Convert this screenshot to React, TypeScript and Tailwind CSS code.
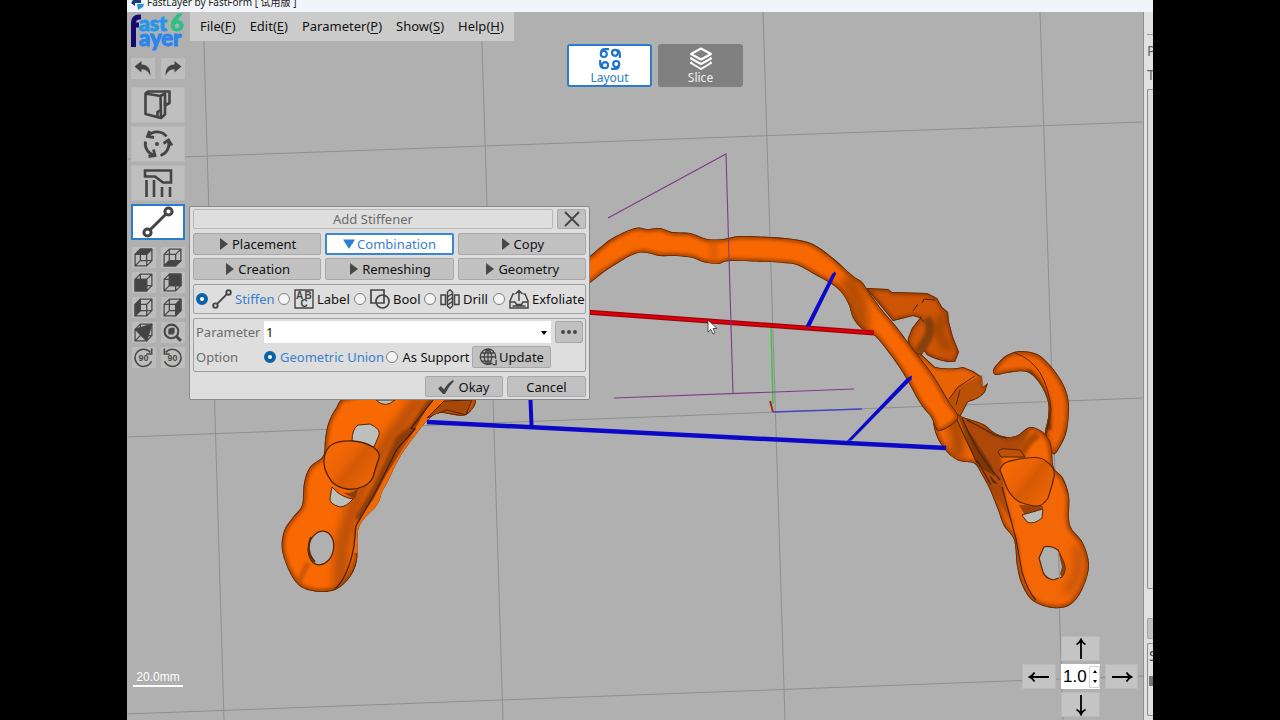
import { useState, type ReactNode } from "react";

type FaceName = "top" | "bottom" | "front" | "back" | "left" | "right" | "iso";

const FACES: Record<FaceName, string> = {
  top: "2,7 7,2 18,2 13,7",
  bottom: "2,18 7,13 18,13 13,18",
  front: "2,7 13,7 13,18 2,18",
  back: "7,2 18,2 18,13 7,13",
  left: "2,7 7,2 7,13 2,18",
  right: "13,7 18,2 18,13 13,18",
  iso: "2,7 18,2 13,18",
};

function CubeIcon({ face }: { face: FaceName }) {
  return (
    <svg viewBox="0 0 20 20" className="size-[21px]" fill="none" stroke="#484848" strokeWidth="1.2" strokeLinejoin="round">
      <path d="M2 7h11v11H2zM7 2h11v11H7zM2 7l5-5M13 7l5-5M13 18l5-5M2 18l5-5" />
      <polygon points={FACES[face]} fill="#444" />
    </svg>
  );
}

function RotateIcon({ flip }: { flip?: boolean }) {
  return (
    <svg viewBox="0 0 20 20" className="size-[21px]" fill="none" stroke="#484848" strokeWidth="1.5">
      <g transform={flip ? "translate(20 0) scale(-1 1)" : undefined}>
        <path d="M16.500 5.200A8.200 8.200 0 1 0 17.600 13.600" />
        <path d="M17.800 1.500v5.200h-5.200" />
      </g>
      <text x="10" y="13.2" fontSize="8.5" fontWeight="700" fontFamily="Liberation Sans, sans-serif" textAnchor="middle" fill="#484848" stroke="none">
        90
      </text>
    </svg>
  );
}

function StiffenIcon({ className }: { className: string }) {
  return (
    <svg viewBox="0 0 32 32" className={className} fill="none" stroke="#444" strokeWidth="3">
      <circle cx="5.5" cy="26.5" r="3.6" />
      <circle cx="26.5" cy="5.5" r="3.6" />
      <path d="M8.2 23.8 23.8 8.2" />
    </svg>
  );
}

function UndoIcon({ flip }: { flip?: boolean }) {
  return (
    <svg viewBox="0 0 20 20" className="size-5" fill="#444">
      <path
        transform={flip ? "translate(20 0) scale(-1 1)" : undefined}
        d="M1.500 7.500 8.500 2v3.500c6 .2 9.500 4 8.800 11.500C16 13 13.500 10.500 8.500 10.300V13.500z"
      />
    </svg>
  );
}

function ModelIcon() {
  return (
    <svg viewBox="0 0 32 32" className="size-8" fill="none" stroke="#444" strokeWidth="2.6" strokeLinejoin="round">
      <path d="M3.500 4.500 6 2.500H27.500V14l-4.500 2.500v-4" />
      <path d="M3.500 4.500 18.500 7l.5 22-15.500-4z" />
      <path d="M18.500 7 23 4.500V25.500l-4 3.500M15.500 28v-5l3-1.500" />
    </svg>
  );
}

function OrientIcon() {
  return (
    <svg viewBox="0 0 32 32" className="size-8" fill="none" stroke="#444" strokeWidth="2.8">
      <circle cx="15" cy="16" r="2" fill="#444" stroke="none" />
      <g transform="translate(-1 0)">
        <path d="M25.500 8.500A12 12 0 0 0 7 8" />
        <path d="M4.500 13.500A12 12 0 0 0 13.500 27.500" />
        <path d="M19.500 27.500A12 12 0 0 0 27.500 13" />
        <path d="M8.500 3 6.500 8.500l6.500 1M7.500 28.500l6.500-1-1.500-6M22.500 15.500l5-3.500 3.500 5.500" />
      </g>
    </svg>
  );
}

function SupportIcon() {
  return (
    <svg viewBox="0 0 32 32" className="size-8" fill="none" stroke="#444" strokeWidth="2.6">
      <path d="M3 3.500h26v12h-8l-8-6H3zM4.500 13v17M12 13v17M20 20v10M28 20v10" />
    </svg>
  );
}

function ZoomIcon() {
  return (
    <svg viewBox="0 0 20 20" className="size-[21px]" fill="none" stroke="#484848" strokeWidth="2">
      <circle cx="9" cy="9" r="6.5" />
      <path d="m13.800 13.800 4.200 4.200" strokeWidth="2.8" />
      <path d="m6 7 2-1.500h4V10l-1.500 2H6z" fill="#484848" stroke="none" />
    </svg>
  );
}

function LayoutIcon() {
  return (
    <svg viewBox="0 0 24 24" className="size-6" fill="none" stroke="#1b76cc" strokeWidth="2.2">
      {[0, 90, 180, 270].map((angle) => (
        <g key={angle} transform={`rotate(${angle} 12 12)`}>
          <circle cx="5.8" cy="7" r="3" />
          <path d="M3 6Q3 2.200 7 2.200H11" />
        </g>
      ))}
    </svg>
  );
}

function SliceIcon() {
  return (
    <svg viewBox="0 0 24 24" className="size-6" fill="none" stroke="#fff" strokeWidth="2" strokeLinejoin="round">
      <path d="M12 1.500 22 7l-10 5.500L2 7z" />
      <path d="m3 10.500-1 1 10 5.500 10-5.500-1-1M3 15l-1 1 10 6 10-6-1-1" />
    </svg>
  );
}

function LabelIcon() {
  return (
    <svg viewBox="0 0 20 20" className="size-5" fill="none" stroke="#444" strokeWidth="1.4">
      <path d="M1 1h18v18H1z" />
      <g fill="#444" stroke="none" fontFamily="Liberation Sans, sans-serif" fontSize="10" fontWeight="700">
        <text x="2" y="9.5">A</text>
        <text x="10.5" y="9.5">B</text>
        <text x="6.5" y="18">C</text>
      </g>
    </svg>
  );
}

function BoolIcon() {
  return (
    <svg viewBox="0 0 20 20" className="size-5" fill="none" stroke="#444" strokeWidth="1.7">
      <path d="M1 1h13v13H1z" />
      <circle cx="12.5" cy="12.5" r="6.5" />
    </svg>
  );
}

function DrillIcon() {
  return (
    <svg viewBox="0 0 20 20" className="size-5" fill="none" stroke="#444" strokeWidth="1.5">
      <path d="M1 6h4.500v9.500H1zM14.500 6H19v9.500h-4.500zM7.500 3 10 .8 12.500 3v14L10 19.200 7.500 17zM7.500 8l5-3.500M7.500 12l5-3.500M7.500 16l5-3.500" />
    </svg>
  );
}

function ExfoliateIcon() {
  return (
    <svg viewBox="0 0 20 20" className="size-5" fill="none" stroke="#444" strokeWidth="1.5">
      <path d="M5.500 5H4L1 12v7h18v-7l-3-7h-1.500M1 13h5l1.500 2.500h5L14 13h5M3.500 17h13M10 12V1.500M6.500 5 10 1.500 13.500 5" />
    </svg>
  );
}

function GlobeIcon() {
  return (
    <svg viewBox="0 0 20 20" className="size-[18px]" fill="none" stroke="#444" strokeWidth="1.5">
      <path d="M15 16.500A8.500 8.500 0 1 1 18.500 10v2M10 1.500v17M1.500 10h17M3 5.500h14M3 14.500h11M10 1.500c-5.500 4-5.500 13 0 17M10 1.500c5.500 4 5.500 13 0 17M19 13v5.500h-4" />
    </svg>
  );
}

function Logo() {
  return (
    <svg viewBox="0 0 56 44" className="h-11 w-14" role="img" aria-label="Fast Layer 6" fontFamily="Lato, sans-serif" fontWeight="900">
      <path d="M4.500 35V11q0-6 6-6H12M4.500 13H10" fill="none" stroke="#150b6e" strokeWidth="5" />
      <text x="10" y="19" fontSize="21" fill="#2796ea" stroke="#2796ea" strokeWidth="1">ast</text>
      <text x="41" y="19" fontSize="23" fill="#2dbf86" stroke="#2dbf86" strokeWidth="1">6</text>
      <text x="10" y="34" fontSize="22" fill="#2a86ee" stroke="#2a86ee" strokeWidth="1">ayer</text>
    </svg>
  );
}

/** Closed Catmull-Rom spline through a list of "x,y" points. */
function smooth(list: string) {
  const p = list.split(" ").map((s) => s.split(",").map(Number));
  const at = (i: number) => p[(i + p.length) % p.length];
  let d = `M${p[0][0]} ${p[0][1]}`;
  for (let i = 0; i < p.length; i++) {
    const [a, b, c, e] = [at(i - 1), at(i), at(i + 1), at(i + 2)];
    d += `C${b[0] + (c[0] - a[0]) / 6} ${b[1] + (c[1] - a[1]) / 6} ${c[0] - (e[0] - b[0]) / 6} ${c[1] - (e[1] - b[1]) / 6} ${c[0]} ${c[1]}`;
  }
  return d + "Z";
}

const PARTS = {
  arch: smooth(
    "575,268 590,256 611,239 635,228 647,229 660,228 672,232 690,233 707,239 723,239 740,236 770,237 793,239 813,244 833,258 852,275 862,282 869,292 883,311 895,325 914,350 933,375 948,400 958,418 939,431 931,417 920,403 903,373 889,353 875,336 862,329 853,318 848,303 837,288 812,273 797,265 783,263 767,262 730,261 718,264 703,262 693,258 676,256 660,256 638,253 610,268 590,283 575,294",
  ),
  hook:
    "M866 288 888 289 892 292 927 293 937 298 942 307 948 312 949 322 953 337 959 352 955 362Q942 363 927 355L924 351 920 358Q906 345 908 338L912 328 920 318 913 316 893 321Z",
  flap: "M915 352 922 355 935 367Q950 370 963 367L973 371 982 377 981 384 983 387 988 383 985 392Q980 399 968 402L960 417 945 410Z",
  ring: smooth(
    "993,370 999,362 1007,355 1020,351 1037,354 1048,363 1057,374 1065,388 1069,405 1067,430 1061,445 1053,454 1045,435 1048,418 1048,402 1040,384 1027,372 1007,373 996,375",
  ),
  plateRight: smooth(
    "940,403 950,406 957,413 963,417 983,424 995,433 1007,437 1018,435 1030,427 1043,432 1050,442 1052,452 1054,468 1063,478 1069,496 1070,525 1083,543 1089,566 1082,590 1070,605 1053,608 1033,601 1022,585 1017,566 1014,540 1004,526 998,510 990,490 982,475 975,464 965,462 957,460 947,452 937,437 933,418",
  ),
  plateLeft: smooth(
    "349,397 336,408 328,424 325,440 323,456 310,467 304,483 302,505 293,517 284,531 282,550 290,573 301,587 320,592 337,589 350,577 357,560 359,527 377,505 382,492 387,483 400,457 417,433 428,420 440,413 466,415 472,396 410,390",
  ),
};

function Part({ name, fill, edge = 7 }: { name: keyof typeof PARTS; fill: string; edge?: number }) {
  const d = PARTS[name];
  return (
    <g clipPath={`url(#clip-${name})`}>
      <path d={d} fill={fill} />
      <path d={d} fill="none" stroke="#7d3000" strokeOpacity=".55" strokeWidth={edge} filter="url(#soft)" />
      <path d={d} fill="none" stroke="#57270a" strokeWidth="1.6" />
    </g>
  );
}

function Scene() {
  return (
    <svg viewBox="127 12 1016 708" preserveAspectRatio="xMinYMin slice" className="absolute inset-0 size-full" aria-hidden="true">
      <defs>
        <filter id="soft" filterUnits="userSpaceOnUse" x="127" y="12" width="1016" height="708">
          <feGaussianBlur stdDeviation="1.8" />
        </filter>
        <filter id="wide" filterUnits="userSpaceOnUse" x="127" y="12" width="1016" height="708">
          <feGaussianBlur stdDeviation="4" />
        </filter>
        <linearGradient id="disc" x1="0" y1="0" x2="1" y2=".7">
          <stop offset="0" stopColor="#fa6c06" />
          <stop offset=".45" stopColor="#ec6305" />
          <stop offset=".6" stopColor="#d55904" />
          <stop offset="1" stopColor="#ee6606" />
        </linearGradient>
        {(Object.keys(PARTS) as (keyof typeof PARTS)[]).map((key) => (
          <clipPath id={`clip-${key}`} key={key}>
            <path d={PARTS[key]} />
          </clipPath>
        ))}
      </defs>

      <g stroke="#8f8f8f" strokeWidth="1" fill="none">
        <path d="M203 12 224 720M481 12 503 720M763 12 785 720M1040 12 1063 720" />
        <path d="M127 159 1143 122M127 437 1143 398M127 714 1143 676" />
      </g>

      <path d="M771 327 773 404" stroke="#32c832" strokeWidth="1.3" />
      <path d="M773 412 862 409" stroke="#4646c0" strokeWidth="1.3" />
      <path d="M770 401 773 412" stroke="#a03010" strokeWidth="2" />

      <Part name="ring" fill="#ee6205" />
      <g clipPath="url(#clip-ring)">
        <path d="M1027 372Q1047 388 1048 430" stroke="#713006" strokeWidth="7" fill="none" filter="url(#soft)" />
        <path d="M1015 353Q1047 364 1051 410L1046 436" stroke="#5d2707" fill="none" />
      </g>
      <Part name="hook" fill="#ce5506" edge={6} />
      <g clipPath="url(#clip-hook)">
        <path d="M926 318Q937 330 918 352" stroke="#874008" strokeWidth="9" fill="none" filter="url(#soft)" />
        <path d="M945 315Q930 330 950 350" stroke="#7d3606" strokeWidth="5" fill="none" filter="url(#wide)" />
        <path d="M913 311 918 304M922 303 924 299 935 300M920 318 924 322" stroke="#4c230a" fill="none" />
      </g>
      <Part name="flap" fill="#e86305" edge={4} />
      <path d="M948 400 956 388 982 375 984 391 967 402 959 414Z" fill="#ac4b07" opacity=".75" />
      <path d="M949 399 958 387 975 376M956 405 960 390" stroke="#5c2a0a" fill="none" />

      <Part name="plateRight" fill="#f36706" />
      <g clipPath="url(#clip-plateRight)">
        <path d="M962 418 1007 438 1031 430 1021 449 1001 456 1006 500 1014 527 988 484Z" fill="#873907" opacity=".65" filter="url(#soft)" />
        <path d="M958 414 992 466 995 476 978 466 967 441Z" fill="#723106" opacity=".8" />
        <path d="M943 407Q965 433 955 459" stroke="#ab4805" strokeWidth="13" fill="none" filter="url(#wide)" />
        <path d="M1038 434Q1023 444 1021 458" stroke="#b04a06" strokeWidth="8" fill="none" filter="url(#soft)" />
        <path d="M1076 546Q1085 570 1066 593" stroke="#a24707" strokeWidth="9" fill="none" opacity=".6" filter="url(#wide)" />
        <path d="M1002 487 1016 539 1022 572Q1028 592 1036 600M962 418Q976 453 1000 480M955 416 977 463M967 420 995 435 1007 438M977 460 991 485" stroke="#4d250c" fill="none" strokeWidth="1.2" />
        <path d="M989 475 998 484 993 483Z" fill="#5c2906" />
        <path d="M998 452Q1000 448 1007 449L1020 450 1025 457 1001 457Z" fill="#bd5207" stroke="#542709" />
        <path d="M1019 505 1043 506 1042 514 1025 515Z" fill="#9e4307" />
        <path d="M1022 515 1043 509 1042 518Q1034 525 1027 522Z" fill="#b9bcb7" stroke="#572b11" />
      </g>
      <path d="M1000 470Q1002 464 1007 462T1027 458 1047 462Q1056 468 1054 477T1048 498Q1043 506 1037 506T1022 503 1007 488Z" fill="url(#disc)" stroke="#572508" strokeWidth="1.2" />
      <path d="M1044 547Q1051 545 1058 550L1064 563Q1067 570 1062 577L1053 580Q1045 578 1043 572L1039 558Z" fill="#b0b0b0" stroke="#572508" strokeWidth="1.2" />
      <path d="M1058 550 1064 563Q1067 570 1062 577L1060 574 1062 567Z" fill="#84400d" />
      <path d="M1058.500 552 1059.500 579" stroke="#8c8c8c" />

      <Part name="arch" fill="#f86802" edge={7} />
      <g clipPath="url(#clip-arch)">
        <path d="M845 278Q862 297 860 331" stroke="#8b3c05" strokeWidth="18" fill="none" opacity=".6" filter="url(#wide)" />
        <path d="M713 238 714 264" stroke="#c95605" strokeWidth="9" opacity=".45" filter="url(#soft)" />
      </g>

      <Part name="plateLeft" fill="#f96903" />
      <g clipPath="url(#clip-plateLeft)">
        <path d="M422 396 387 443 362 486 350 518 342 545 340 588" stroke="#8b3d08" strokeWidth="15" fill="none" opacity=".55" filter="url(#wide)" />
        <path d="M434 398 414 428 400 440 378 486 359 520" stroke="#6f310a" strokeWidth="9" fill="none" opacity=".75" filter="url(#soft)" />
        <path d="M437 398 412 441 389 477 377 500 359 526 357 553" stroke="#ef6907" strokeWidth="7" fill="none" />
        <path d="M433 400 411 428 415 429 397 449 381 481 371 500 356 526 354 546Q348 578 334 590" stroke="#482109" fill="none" strokeWidth="1.3" />
        <path d="M427 418 444 401 472 400 466 415 447 410Z" fill="#a54808" stroke="#4c2309" />
        <path d="M297 585 308 563" stroke="#ab4b07" strokeWidth="5" opacity=".6" filter="url(#soft)" />
        <path d="M376 400Q385 409 395 400Z" fill="#b9bcb7" stroke="#572508" />
        <path d="M333 487Q350 499 359 487L355 499Z" fill="#8c3d07" />
      </g>
      <path d="M352 441Q352 429 358 425L370 424Q381 429 379 435L374 447Z" fill="#bcbfba" stroke="#572508" />
      <path d="M332 487Q340 497 353 499 346 507 340 507 329 504 330 498Z" fill="#bcbfba" stroke="#572508" />
      <path d="M324 460Q325 448 333 444T353 441 373 447Q381 453 379 458T373 477Q370 484 362 487T347 489Q338 488 332 482 323 470 324 460Z" fill="url(#disc)" stroke="#4c2209" strokeWidth="1.3" />
      <ellipse cx="321" cy="548" rx="12.5" ry="17" transform="rotate(12 321 548)" fill="#b0b0b0" stroke="#572508" strokeWidth="1.3" />
      <path d="M311 537Q305 552 315 562" stroke="#5c2807" strokeWidth="2" fill="none" />

      <path d="M585 312 874 333" stroke="#a00008" strokeWidth="5" />
      <path d="M585 312 874 333" stroke="#dc000c" strokeWidth="2.5" />
      <g stroke="#0c08c8" fill="none">
        <path d="M427 422 946 448" strokeWidth="4.5" />
        <path d="M530.500 400 531.500 425" strokeWidth="4" />
      </g>
      <path d="m832 274 3-2.500 1 2.500-26 53-4.500-.5z" fill="#0c08c8" />
      <path d="m907 378 5-2.500-.5 4-60 61-4.500.5z" fill="#0c08c8" />

      <path d="M608 218 726 154 733 393M614 398 854 389" fill="none" stroke="#803a88" strokeWidth="1.1" />
      <path d="M708 320v12l3-2.500 2 4.500 2-1-2-4.500h4z" fill="#fff" stroke="#333" strokeWidth=".8" />
    </svg>
  );
}

function ToolButton({ label, active, onClick, children }: { label: string; active?: boolean; onClick?: () => void; children: ReactNode }) {
  return (
    <button
      type="button"
      aria-label={label}
      onClick={onClick}
      className={`flex h-9 items-center justify-center ${active ? "border-2 border-[#2a7dcb] bg-white" : "border border-[#b9b9b9] bg-[#bfbfbf]"}`}
    >
      {children}
    </button>
  );
}

function SmallButton({ label, children }: { label: string; children: ReactNode }) {
  return (
    <button type="button" aria-label={label} className="flex h-[21px] w-6 items-center justify-center bg-[#bdbdbd]">
      {children}
    </button>
  );
}

function Sidebar() {
  const [tool, setTool] = useState("Add stiffener");
  const tools: [string, ReactNode][] = [
    ["Model", <ModelIcon />],
    ["Orientation", <OrientIcon />],
    ["Support", <SupportIcon />],
    ["Add stiffener", <StiffenIcon className="size-8" />],
  ];
  const faces: FaceName[] = ["top", "bottom", "front", "back", "left", "right", "iso"];
  return (
    <aside className="relative flex w-[63px] shrink-0 flex-col pl-1 pr-[5px]">
      <div className="-mx-0.5 h-[46px]">
        <Logo />
      </div>
      <div className="flex justify-between">
        <SmallButton label="Undo"><UndoIcon /></SmallButton>
        <SmallButton label="Redo"><UndoIcon flip /></SmallButton>
      </div>
      <div className="mt-2 flex flex-col gap-[3px]">
        {tools.map(([name, icon]) => (
          <ToolButton key={name} label={name} active={tool === name} onClick={() => setTool(name)}>
            {icon}
          </ToolButton>
        ))}
      </div>
      <div className="mt-[7px] grid grid-cols-2 justify-items-center gap-1">
        {faces.map((face) => (
          <SmallButton key={face} label={`View ${face}`}>
            <CubeIcon face={face} />
          </SmallButton>
        ))}
        <SmallButton label="Zoom to fit"><ZoomIcon /></SmallButton>
        <SmallButton label="Rotate clockwise"><RotateIcon /></SmallButton>
        <SmallButton label="Rotate counterclockwise"><RotateIcon flip /></SmallButton>
      </div>
    </aside>
  );
}

function MenuBar() {
  const items = [["File", "F"], ["Edit", "E"], ["Parameter", "P"], ["Show", "S"], ["Help", "H"]];
  return (
    <nav className="relative flex h-[29px] items-center gap-[14px] self-start bg-[#cbcbcb] px-2.5 pt-px text-[13px] text-[#111]">
      {items.map(([name, key]) => (
        <button type="button" key={name}>
          {name}(<span className="underline underline-offset-2">{key}</span>)
        </button>
      ))}
    </nav>
  );
}

function ModeSwitch() {
  return (
    <div className="absolute left-[440px] top-8 flex gap-1.5 text-[12px] leading-[14px]">
      <button type="button" className="flex h-[43px] w-[85px] flex-col items-center justify-end rounded-[3px] border-2 border-[#2a7dcb] bg-white text-[#2b7cc8]">
        <LayoutIcon />
        Layout
      </button>
      <button type="button" className="flex h-[43px] w-[85px] flex-col items-center justify-end rounded-[3px] bg-[#808080] pb-0.5 text-[#f2f2f2]">
        <SliceIcon />
        Slice
      </button>
    </div>
  );
}

const RADIO =
  "size-3 shrink-0 appearance-none rounded-full border border-[#808080] bg-[#f4f4f4] checked:border-4 checked:border-[#0b62a8] checked:bg-white";
const BTN = "flex items-center justify-center rounded-[2px] border border-[#a9a9a9] bg-[#c1c1c1]";

function StiffenerDialog() {
  const [tab, setTab] = useState("Combination");
  const [mode, setMode] = useState("Stiffen");
  const [option, setOption] = useState("Geometric Union");
  const tabs = ["Placement", "Combination", "Copy", "Creation", "Remeshing", "Geometry"];
  const modes: [string, ReactNode][] = [
    ["Stiffen", <StiffenIcon className="size-5" />],
    ["Label", <LabelIcon />],
    ["Bool", <BoolIcon />],
    ["Drill", <DrillIcon />],
    ["Exfoliate", <ExfoliateIcon />],
  ];
  return (
    <section
      role="dialog"
      aria-label="Add Stiffener"
      className="absolute left-[62px] top-[194px] flex w-[401px] flex-col gap-1 rounded-[2px] border border-[#8a8a8a] bg-[#dedede] px-[3px] py-[2px] text-[13px] leading-5 text-[#111]"
    >
      <header className="flex h-5 gap-1">
        <h2 className="flex flex-1 items-center justify-center rounded-[2px] border border-[#b8b8b8] text-[#6c6c6c]">Add Stiffener</h2>
        <button type="button" aria-label="Close" className={`${BTN} w-[29px]`}>
          <svg viewBox="0 0 16 16" className="size-4" stroke="#444" strokeWidth="1.8">
            <path d="m1 1 14 14M15 1 1 15" />
          </svg>
        </button>
      </header>

      <div className="grid grid-cols-3 gap-x-1 gap-y-[3px]">
        {tabs.map((name) => {
          const open = tab === name;
          return (
            <button
              type="button"
              key={name}
              onClick={() => setTab(name)}
              className={`flex h-[22px] items-center justify-center gap-0.5 rounded-[2px] ${open ? "border-2 border-[#3a88d4] bg-white text-[#3a80cc]" : "border border-[#a9a9a9] bg-[#c1c1c1]"}`}
            >
              <svg viewBox="0 0 12 12" className="size-3" fill={open ? "#2d7fd0" : "#484848"}>
                <path d={open ? "M0 1.500h12L6 11z" : "M2 0v12l8-6z"} />
              </svg>
              {name}
            </button>
          );
        })}
      </div>

      <fieldset className="grid h-[30px] min-w-0 grid-cols-[82px_76px_70px_69px_1fr] items-center overflow-hidden rounded-[2px] border border-[#a0a0a0] px-[2px]">
        {modes.map(([name, icon]) => (
          <label key={name} className={`flex items-center gap-1 whitespace-nowrap ${mode === name ? "text-[#3a80cc]" : ""}`}>
            <input type="radio" name="mode" className={RADIO} checked={mode === name} onChange={() => setMode(name)} />
            <span className="flex items-center gap-[3px]">
              {icon}
              {name}
            </span>
          </label>
        ))}
      </fieldset>

      <div className="grid h-[54px] grid-cols-[68px_1fr_28px] grid-rows-[22px_22px] content-start items-center gap-y-[3px] rounded-[2px] border border-[#a0a0a0] px-[2px] pt-[2px]">
        <label htmlFor="parameter" className="text-[#6c6c6c]">Parameter</label>
        <div className="relative mr-1">
          <select id="parameter" defaultValue="1" className="block h-[22px] w-full appearance-none bg-white px-0.5 leading-5">
            <option>1</option>
            <option>2</option>
            <option>3</option>
          </select>
          <svg viewBox="0 0 6 4" className="pointer-events-none absolute right-1 top-2.5 h-1 w-1.5">
            <path d="M0 0h6L3 4z" />
          </svg>
        </div>
        <button type="button" aria-label="More" className={`${BTN} h-[22px]`}>
          <svg viewBox="0 0 16 4" className="h-1 w-4" fill="#484848">
            <circle cx="2" cy="2" r="2" />
            <circle cx="8" cy="2" r="2" />
            <circle cx="14" cy="2" r="2" />
          </svg>
        </button>
        <span className="text-[#6c6c6c]">Option</span>
        <div className="mr-1 flex items-center justify-between whitespace-nowrap">
          {["Geometric Union", "As Support"].map((name) => (
            <label key={name} className={`flex items-center gap-1 ${option === name ? "text-[#3a80cc]" : ""}`}>
              <input type="radio" name="option" className={RADIO} checked={option === name} onChange={() => setOption(name)} />
              {name}
            </label>
          ))}
          <button type="button" className={`${BTN} h-[22px] w-[79px] gap-0.5`}>
            <GlobeIcon />
            Update
          </button>
        </div>
      </div>

      <footer className="flex h-[21px] justify-end gap-1">
        <button type="button" className={`${BTN} w-[78px] gap-1`}>
          <svg viewBox="0 0 16 16" className="size-4" fill="#444">
            <path d="M0 9.500 3 7l3 3.500Q9.500 4 15 1l1 1Q11 7 7 15H5z" />
          </svg>
          Okay
        </button>
        <button type="button" className={`${BTN} w-[79px]`}>Cancel</button>
      </footer>
    </section>
  );
}

function Arrow({ turn }: { turn: string }) {
  return (
    <svg viewBox="0 0 22 22" className={`size-[22px] ${turn}`} fill="none" stroke="#000" strokeWidth="1.8">
      <path d="M11 21V2M6.500 6.500Q9.500 5 11 1.500 12.500 5 15.500 6.500" />
    </svg>
  );
}

function StepPad() {
  const [step, setStep] = useState("1.0");
  const nudge = (by: number) => setStep((Number(step) + by).toFixed(1));
  const key = "flex items-center justify-center border border-[#b9b9b9] bg-[#c4c4c4]";
  return (
    <div className="absolute bottom-[3px] right-[5px] grid grid-cols-[34px_39px_33px] grid-rows-[25px_25px_25px] gap-x-[5px] gap-y-[3px]">
      <button type="button" aria-label="Move up" className={`${key} col-start-2`}><Arrow turn="rotate-0" /></button>
      <button type="button" aria-label="Move left" className={`${key} col-start-1`}><Arrow turn="-rotate-90" /></button>
      <div className="flex items-center bg-white pl-0.5 font-['Liberation_Sans',sans-serif]">
        <input aria-label="Step" value={step} onChange={(e) => setStep(e.target.value)} className="w-0 flex-1 text-[17px] leading-6" />
        <span className="flex h-[22px] w-[11px] flex-col border border-[#d4d4d4]">
          {[1, -1].map((by) => (
            <button type="button" key={by} aria-label={by > 0 ? "Increase" : "Decrease"} onClick={() => nudge(by / 10)} className="flex flex-1 items-center justify-center">
              <svg viewBox="0 0 4 3" className="h-[3px] w-1">
                <path d={by > 0 ? "M0 3h4L2 0z" : "M0 0h4L2 3z"} />
              </svg>
            </button>
          ))}
        </span>
      </div>
      <button type="button" aria-label="Move right" className={key}><Arrow turn="rotate-90" /></button>
      <button type="button" aria-label="Move down" className={`${key} col-start-2`}><Arrow turn="rotate-180" /></button>
    </div>
  );
}

function SidePanel() {
  return (
    <aside className="flex w-2.5 shrink-0 flex-col overflow-hidden border-l border-[#8f8f8f] bg-[#e1e1e1] pl-[3px] text-[14px] leading-6 text-[#666]">
      <div className="mt-[22px] h-[55px] border-t border-[#999] pt-1">
        <p>P</p>
        <p>T</p>
      </div>
      <div className="flex-1 rounded-l-[2px] border border-r-0 border-[#8c8c8c] bg-[#dadada]" />
      <div className="mt-[29px] h-[21px] rounded-l-[2px] border border-r-0 border-[#a5a5a5] bg-[#c1c1c1]" />
      <div className="mb-1 mt-1 h-[73px] rounded-l-[2px] border border-r-0 border-[#8c8c8c] pl-px text-[#444]">
        <p>S</p>
        <div className="mt-2 h-2.5 bg-[#777]" />
      </div>
    </aside>
  );
}

export default function App() {
  return (
    <div className="flex h-screen justify-center bg-black px-[127px] font-['Noto_Sans','Noto_Sans_CJK_SC',sans-serif]">
      <div className="flex min-w-0 flex-1 flex-col overflow-hidden">
        <header className="flex h-3 shrink-0 items-end gap-px overflow-hidden bg-[#f1f5f9] px-[3px] text-[10px] leading-5 text-[#222]">
          <svg viewBox="0 0 16 16" className="mb-0.5 size-4 shrink-0">
            <path d="M1 9 5 3v3h6v3H5v3z" fill="#173a7c" />
            <path d="M7 10h7l-1 3-5 3z" fill="#2b8ee0" />
          </svg>
          <h1>FastLayer by FastForm [ 试用版 ]</h1>
        </header>
        <div className="flex min-h-0 flex-1">
          <main className="relative flex min-w-0 flex-1 overflow-hidden bg-[#b0b0b0]">
            <Scene />
            <Sidebar />
            <MenuBar />
            <ModeSwitch />
            <StiffenerDialog />
            <p className="absolute bottom-[33px] left-1.5 w-[50px] border-b-2 border-white text-center font-['Liberation_Sans',sans-serif] text-[12px] leading-4 text-white">
              20.0mm
            </p>
            <StepPad />
          </main>
          <SidePanel />
        </div>
      </div>
    </div>
  );
}
